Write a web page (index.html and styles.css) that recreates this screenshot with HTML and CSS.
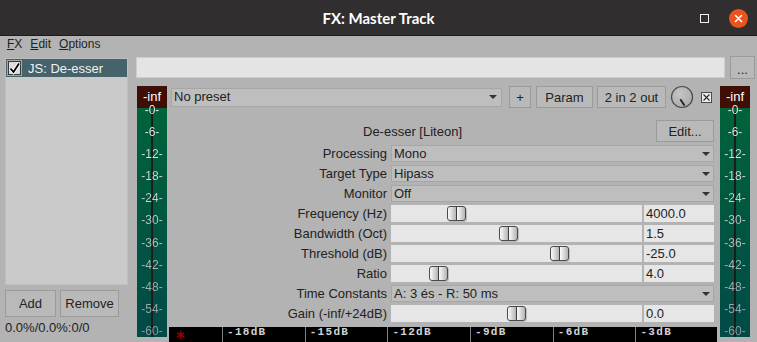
FILE: index.html
```html
<!DOCTYPE html>
<html lang="en">
<head>
  <meta charset="UTF-8" />
  <title>FX: Master Track</title>
  <link rel="stylesheet" href="styles.css">
</head>
<body>
  <div class="titlebar">
    <div></div>
    <span class="title">FX: Master Track</span>
    <div class="winbtns">
      <span class="maxbtn"></span>
      <svg class="closebtn" width="19" height="19" viewBox="0 0 19 19">
        <circle cx="9.5" cy="9.5" r="9.5" fill="#e95420"/>
        <path d="M6.5 6.5 L12.5 12.5 M12.5 6.5 L6.5 12.5" stroke="#fff" stroke-width="1.6" stroke-linecap="round"/>
      </svg>
    </div>
  </div>

  <div class="menubar">
    <span><u>F</u>X</span>
    <span><u>E</u>dit</span>
    <span><u>O</u>ptions</span>
  </div>

  <div class="main">
    <div class="sidebar">
      <div class="fxlist">
        <div class="fxitem selected">
          <svg width="15" height="16" viewBox="0 0 15 16">
            <rect x="0.5" y="0.5" width="14" height="15" fill="#5d7076" stroke="#a8a8a8"/>
            <rect x="1.5" y="1.5" width="12" height="13" fill="#dcdcdc" stroke="#3a3a3a"/>
            <path d="M3.5 8.5 L6.5 12 L12 3.5" fill="none" stroke="#fff" stroke-width="3.6"/>
            <path d="M3.5 8.5 L6.5 12 L12 3.5" fill="none" stroke="#000" stroke-width="1.8"/>
          </svg>
          <span>JS: De-esser</span>
        </div>
      </div>
      <div class="sidebtns">
        <button class="btn add-btn">Add</button>
        <button class="btn remove-btn">Remove</button>
      </div>
      <div class="cpu">0.0%/0.0%:0/0</div>
    </div>

    <div class="content">
      <div class="toprow">
        <div class="textfield"></div>
        <button class="btn dots-btn">...</button>
      </div>

      <div class="rack">
        <div class="meter">
          <div class="meter-peak">-inf</div>
          <div class="meter-bar"><div class="meter-line"></div></div>
          <div class="meter-scale">
            <span>-0-</span><span>-6-</span><span>-12-</span><span>-18-</span><span>-24-</span><span>-30-</span>
            <span>-36-</span><span>-42-</span><span>-48-</span><span>-54-</span><span>-60-</span>
          </div>
        </div>

        <div class="plugin">
          <div class="presetrow">
            <div class="dropdown preset">No preset<i class="arrow"></i></div>
            <button class="btn plus-btn">+</button>
            <button class="btn param-btn">Param</button>
            <button class="btn io-btn">2 in 2 out</button>
            <svg class="knob" width="24" height="24" viewBox="0 0 24 24">
              <defs>
                <radialGradient id="kg" cx="40%" cy="35%" r="70%">
                  <stop offset="0" stop-color="#c6c6c6"/>
                  <stop offset="1" stop-color="#a9a9a9"/>
                </radialGradient>
              </defs>
              <circle cx="12.6" cy="12.6" r="10.6" fill="#8e8e8e"/>
              <circle cx="12" cy="12" r="10.5" fill="url(#kg)" stroke="#4c4c4c" stroke-width="1.2"/>
              <path d="M10.3 14.3 L14.5 20.5" stroke="#1e1e1e" stroke-width="1.8"/>
            </svg>
            <svg class="bypass" width="11" height="11" viewBox="0 0 11 11">
              <rect x="0.5" y="0.5" width="10" height="10" fill="#ececec" stroke="#4a4a4a"/>
              <path d="M2.5 2.5 L8.5 8.5 M8.5 2.5 L2.5 8.5" stroke="#2a2a2a" stroke-width="1.1"/>
            </svg>
          </div>

          <div class="titlerow">
            <span class="plugname">De-esser [Liteon]</span>
            <button class="btn edit-btn">Edit...</button>
          </div>

          <div class="params">
            <div class="plabel">Processing</div>
            <div class="dropdown">Mono<i class="arrow"></i></div>

            <div class="plabel">Target Type</div>
            <div class="dropdown">Hipass<i class="arrow"></i></div>

            <div class="plabel">Monitor</div>
            <div class="dropdown">Off<i class="arrow"></i></div>

            <div class="plabel">Frequency (Hz)</div>
            <div class="slider"><div class="track"><span class="thumb" style="left: 56px"></span></div><div class="value">4000.0</div></div>

            <div class="plabel">Bandwidth (Oct)</div>
            <div class="slider"><div class="track"><span class="thumb" style="left: 108px"></span></div><div class="value">1.5</div></div>

            <div class="plabel">Threshold (dB)</div>
            <div class="slider"><div class="track"><span class="thumb" style="left: 159px"></span></div><div class="value">-25.0</div></div>

            <div class="plabel">Ratio</div>
            <div class="slider"><div class="track"><span class="thumb" style="left: 38px"></span></div><div class="value">4.0</div></div>

            <div class="plabel">Time Constants</div>
            <div class="dropdown">A: 3 és - R: 50 ms<i class="arrow"></i></div>

            <div class="plabel">Gain (-inf/+24dB)</div>
            <div class="slider"><div class="track"><span class="thumb" style="left: 116px"></span></div><div class="value">0.0</div></div>
          </div>

          <div class="scale">
            <div class="scale-first">∗</div>
            <div class="scale-cell">-18dB</div>
            <div class="scale-cell">-15dB</div>
            <div class="scale-cell">-12dB</div>
            <div class="scale-cell">-9dB</div>
            <div class="scale-cell">-6dB</div>
            <div class="scale-cell">-3dB</div>
          </div>
        </div>

        <div class="meter meter-right">
          <div class="meter-peak">-inf</div>
          <div class="meter-bar"><div class="meter-line"></div></div>
          <div class="meter-scale">
            <span>-0-</span><span>-6-</span><span>-12-</span><span>-18-</span><span>-24-</span><span>-30-</span>
            <span>-36-</span><span>-42-</span><span>-48-</span><span>-54-</span><span>-60-</span>
          </div>
        </div>
      </div>
    </div>
  </div>
</body>
</html>
```

FILE: styles.css
```css
body {
  margin: 0;
  width: 757px;
  height: 342px;
  overflow: hidden;
  background: #b3b3b3;
  font-family: "Liberation Sans", Arial, sans-serif;
  font-size: 13px;
  color: #222;
}
.btn {
  font: inherit;
  color: #222;
  background: #b9b9b9;
  border: 1px solid #9b9b9b;
  padding: 0;
  box-sizing: border-box;
  flex-shrink: 0;
}

/* title bar */
.titlebar {
  height: 35px;
  border-bottom: 1px solid #1d1c1c;
  background: #302e2e;
  display: grid;
  grid-template-columns: 1fr auto 1fr;
  align-items: center;
}
.title {
  color: #fff;
  font-family: Lato, sans-serif;
  font-weight: bold;
  font-size: 15px;
}
.winbtns {
  display: flex;
  justify-content: flex-end;
  align-items: center;
  gap: 20px;
  padding-right: 9px;
  padding-top: 1px;
}
.maxbtn {
  width: 7px;
  height: 7px;
  border: 1.3px solid #f0f0f0;
}

/* menu */
.menubar {
  height: 20px;
  line-height: 16px;
  display: flex;
  gap: 8px;
  padding-left: 7px;
  font-size: 12px;
}

.main {
  display: flex;
  height: 286px;
}

/* left fx list */
.sidebar {
  width: 123px;
  padding-left: 5px;
  flex-shrink: 0;
}
.fxlist {
  margin-top: 2px;
  height: 225px;
  background: #cacaca;
  border: 1px solid #bebebe;
}
.fxitem {
  height: 18px;
  display: flex;
  align-items: center;
  gap: 6px;
  padding-left: 1px;
}
.fxitem.selected {
  background: #46626a;
  color: #f2f2f2;
}
.sidebtns {
  display: flex;
  gap: 4px;
  margin-top: 5px;
}
.sidebtns .btn {
  height: 27px;
}
.add-btn { width: 51px; }
.remove-btn { width: 59px; }
.cpu {
  margin-top: 3px;
  line-height: 16px;
}

/* right side */
.content {
  margin-left: 8px;
  width: 621px;
}
.toprow {
  display: flex;
  height: 23px;
}
.textfield {
  margin-top: 1px;
  width: 589px;
  height: 21px;
  box-sizing: border-box;
  background: #e4e4e4;
  border: 1px solid #cdcdcd;
}
.dots-btn {
  margin-left: 5px;
  width: 25px;
  height: 23px;
  line-height: 18px;
  padding-top: 4px;
}
.rack {
  display: flex;
  margin-top: 7px;
}

/* level meters */
.meter {
  width: 30px;
  height: 251px;
  margin-left: 1px;
  position: relative;
  flex-shrink: 0;
}
.meter-right {
  margin-left: 3px;
}
.meter-peak {
  height: 22px;
  line-height: 21px;
  background: #3f0e04;
  color: #fff;
  text-align: center;
}
.meter-bar {
  height: 229px;
  background: linear-gradient(#00633a, #014a48);
  position: relative;
}
.meter-line {
  position: absolute;
  left: 14px;
  width: 2px;
  top: 4px;
  bottom: 0;
  background: #1c1c1c;
}
.meter-scale {
  position: absolute;
  top: 18px;
  bottom: 0;
  left: 0;
  right: 0;
  display: flex;
  flex-direction: column;
  justify-content: space-between;
  align-items: center;
  font-size: 12px;
  line-height: 12px;
  background: linear-gradient(#f2f2f2, #c8d0cc 40%, #8c9c9a);
  -webkit-background-clip: text;
  background-clip: text;
  color: transparent;
}

/* plugin area */
.plugin {
  width: 548px;
  margin-left: 2px;
  flex-shrink: 0;
}
.presetrow {
  display: flex;
  align-items: center;
  height: 22px;
}
.dropdown {
  height: 17px;
  line-height: 16px;
  box-sizing: border-box;
  background: #bebebe;
  border: 1px solid #a6a6a6;
  padding: 0 3px 0 2px;
  display: flex;
  justify-content: space-between;
  align-items: center;
  white-space: nowrap;
}
.dropdown.preset {
  margin-left: 2px;
  width: 331px;
  height: 19px;
  line-height: 18px;
  padding-right: 4px;
}
.arrow {
  width: 0;
  height: 0;
  border-left: 4px solid transparent;
  border-right: 4px solid transparent;
  border-top: 4px solid #333;
}
.plus-btn { margin-left: 7px; width: 22px; height: 22px; }
.param-btn { margin-left: 5px; width: 57px; height: 22px; }
.io-btn { margin-left: 4px; width: 69px; height: 22px; }
.knob { margin-left: 4px; flex-shrink: 0; }
.bypass { margin-left: 7px; flex-shrink: 0; }

.titlerow {
  display: flex;
  align-items: center;
  height: 22px;
  margin-top: 12px;
}
.plugname {
  flex: 1;
  text-align: center;
}
.edit-btn {
  width: 58px;
  height: 22px;
  margin-right: 3px;
}

.params {
  margin-top: 3px;
  display: grid;
  grid-template-columns: 218px 1fr;
  grid-auto-rows: 17px;
  row-gap: 3px;
  column-gap: 4px;
  padding-right: 3px;
}
.plabel {
  text-align: right;
  line-height: 17px;
  white-space: nowrap;
}
.slider {
  display: flex;
  gap: 2px;
}
.track {
  flex: 1;
  background: #e6e6e6;
  position: relative;
}
.thumb {
  position: absolute;
  top: 1px;
  width: 19px;
  height: 15px;
  box-sizing: border-box;
  border: 1px solid #4a4a4a;
  border-radius: 3px;
  background: linear-gradient(90deg, #fbfbfb 0, #b4b4b4 8px, #3c3c3c 8px, #3c3c3c 9px, #fbfbfb 9px, #b4b4b4 17px);
  box-shadow: 1px 1px 0 rgba(0, 0, 0, 0.18);
}
.value {
  width: 70px;
  background: #e6e6e6;
  padding-left: 2px;
  line-height: 17px;
  box-sizing: border-box;
}

/* bottom dB scale */
.scale {
  margin-top: 5px;
  height: 15px;
  background: #000;
  display: flex;
  overflow: hidden;
}
.scale-first {
  flex: 0 0 53px;
  padding-left: 6px;
  box-sizing: border-box;
  color: #960000;
  font-family: "DejaVu Sans", sans-serif;
  font-weight: bold;
  font-size: 13px;
  line-height: 15px;
  padding-top: 0;
}
.scale-cell {
  flex: 0 0 82.7px;
  box-sizing: border-box;
  border-left: 1px solid #808080;
  padding-left: 4px;
  color: #d2d2d2;
  font-family: "Liberation Mono", monospace;
  font-weight: bold;
  font-size: 11px;
  letter-spacing: 1.3px;
  line-height: 11px;
  white-space: nowrap;
}
```
